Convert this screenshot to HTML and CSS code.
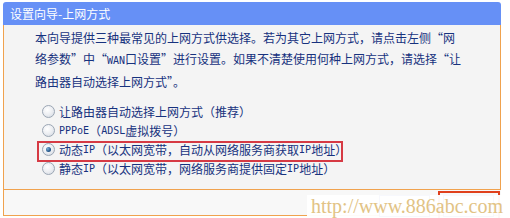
FILE: index.html
```html
<!DOCTYPE html>
<html lang="zh-CN">
<head>
<meta charset="utf-8">
<title>设置向导-上网方式</title>
<link rel="stylesheet" href="styles.css">
</head>
<body>
<div class="panel">
  <div class="title">设置向导-上网方式</div>
  <div class="content">
    <p class="intro">本向导提供三种最常见的上网方式供选择。若为其它上网方式，请点击左侧“网<br>络参数”中“<span class="lat">WAN</span>口设置”进行设置。如果不清楚使用何种上网方式，请选择“让<br>路由器自动选择上网方式”。</p>
    <div class="options">
      <div class="opt"><span class="radio"></span>让路由器自动选择上网方式（推荐）</div>
      <div class="opt"><span class="radio"></span><span class="lat">PPPoE</span>（<span class="lat">ADSL</span>虚拟拨号）</div>
      <div class="opt hl"><span class="radio on"></span>动态<span class="lat">IP</span>（以太网宽带，自动从网络服务商获取<span class="lat">IP</span>地址）</div>
      <div class="opt"><span class="radio"></span>静态<span class="lat">IP</span>（以太网宽带，网络服务商提供固定<span class="lat">IP</span>地址）</div>
    </div>
  </div>
  <div class="footer">
    <span class="btn"></span>
    <span class="btn next"></span>
  </div>
</div>
<div class="watermark">http://www.886abc.com</div>
</body>
</html>
```

FILE: styles.css
```css
html, body {
  margin: 0;
  padding: 0;
  background: #ffffff;
}
body {
  width: 510px;
  height: 218px;
  overflow: hidden;
  position: relative;
  font-family: "Noto Sans CJK SC", "Noto Sans", sans-serif;
  font-size: 12px;
  color: #17327e;
}
.panel {
  margin: 2px 0 0 3px;
  width: 498px;
}
.title {
  height: 23px;
  line-height: 23px;
  background: #6690f6;
  color: #ffffff;
  padding-left: 7px;
  font-size: 12px;
  border-radius: 3px 3px 0 0;
}
.content {
  background: #f4f4f4;
  border-left: 1px solid #f0a24e;
  border-right: 1px solid #f0a24e;
  border-bottom: 1px solid #f0a24e;
  padding: 2px 0 11px 31px;
}
.intro {
  margin: 0;
  line-height: 21px;
  white-space: nowrap;
}
.lat {
  font-family: "DejaVu Sans Mono", monospace;
  font-size: 10px;
}
.options {
  margin-top: 10px;
  padding-left: 7px;
}
.opt {
  position: relative;
  height: 19px;
  line-height: 19px;
  display: flex;
  align-items: center;
  white-space: nowrap;
}
.radio {
  width: 11px;
  height: 11px;
  border: 1px solid #9ba6b4;
  border-radius: 50%;
  background: radial-gradient(circle at 40% 35%, #ffffff 0%, #eceef2 50%, #cfd5de 100%);
  margin-right: 4px;
  flex: none;
  position: relative;
}
.radio.on::after {
  content: "";
  position: absolute;
  left: 3px;
  top: 3px;
  width: 5px;
  height: 5px;
  border-radius: 50%;
  background: radial-gradient(circle at 35% 35%, #7fb0d8 0%, #24588c 60%, #163f6a 100%);
}
.hl::before {
  content: "";
  position: absolute;
  left: -5px;
  top: 1px;
  width: 302px;
  height: 17px;
  border: 2px solid #d63a44;
}
.footer {
  height: 20px;
  background: #f8f8f8;
  border-left: 1px solid #f0a24e;
  border-bottom: 1px solid #f0a24e;
  padding-top: 5px;
  padding-right: 7px;
  display: flex;
  justify-content: flex-end;
  gap: 13px;
}
.btn {
  position: relative;
  width: 49px;
  height: 20px;
  border: 1px solid #3a58c0;
  background: #eef0f6;
}
.btn.next::before {
  content: "";
  position: absolute;
  left: -6px;
  top: -5px;
  width: 58px;
  height: 30px;
  border: 2px solid #e0401c;
}
.watermark {
  position: absolute;
  left: 307px;
  top: 195px;
  width: 199px;
  height: 23px;
  padding-left: 4px;
  background: rgba(255, 255, 255, 0.96);
  font-family: "Liberation Serif", serif;
  font-size: 20px;
  line-height: 23px;
  color: #e2c385;
  white-space: nowrap;
}
```
